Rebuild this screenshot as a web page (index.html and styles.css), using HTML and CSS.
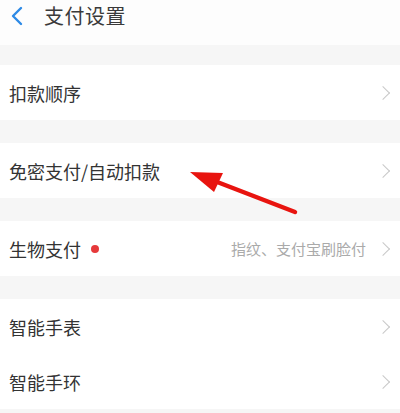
FILE: index.html
```html
<!DOCTYPE html>
<html lang="zh">
<head>
<meta charset="utf-8">
<link rel="stylesheet" href="styles.css">
</head>
<body>
<div class="page">
  <header class="topbar">
    <svg class="back" width="14" height="20" viewBox="0 0 14 20"><path d="M11 2 L3 10 L11 18" fill="none" stroke="#2d8ae6" stroke-width="2.4" stroke-linecap="round" stroke-linejoin="round"/></svg>
    <span class="title">支付设置</span>
  </header>
  <div class="gap g1"></div>
  <div class="row"><span class="label">扣款顺序</span><span class="chev"></span></div>
  <div class="gap"></div>
  <div class="row"><span class="label">免密支付/自动扣款</span><span class="chev"></span></div>
  <div class="gap"></div>
  <div class="row"><span class="label">生物支付</span><span class="dot"></span><span class="value">指纹、支付宝刷脸付</span><span class="chev"></span></div>
  <div class="gap"></div>
  <div class="row"><span class="label">智能手表</span><span class="chev"></span></div>
  <div class="row"><span class="label">智能手环</span><span class="chev"></span></div>
  <svg class="arrow" width="400" height="413" viewBox="0 0 400 413">
    <line x1="295" y1="212" x2="212" y2="180" stroke="#e8140f" stroke-width="4.5" stroke-linecap="round"/>
    <polygon points="190,172 223,173 214,192" fill="#e8140f"/>
  </svg>
</div>
</body>
</html>
```
FILE: styles.css
```css
* { box-sizing: border-box; }
html, body { margin: 0; padding: 0; }
body {
  width: 400px;
  height: 413px;
  overflow: hidden;
  background: #f6f6f6;
  font-family: "Noto Sans CJK SC", "Noto Sans", sans-serif;
  color: #333;
}
.page { position: relative; width: 400px; height: 413px; }
.topbar {
  height: 45px;
  background: #fdfdfd;
  display: flex;
  align-items: center;
  padding-left: 10px;
  padding-bottom: 14px;
}
.back { margin-right: 20px; }
.title { font-size: 20px; color: #3a3a3a; letter-spacing: 0.5px; }
.gap { height: 23px; }
.g1 { height: 20px; }
.row {
  height: 55px;
  background: #fff;
  display: flex;
  align-items: center;
  padding: 0 8px 0 9px;
}
.label { font-size: 18px; color: #333; }
.dot {
  width: 8px; height: 8px; border-radius: 50%;
  background: #e6393a;
  margin-left: 10px;
}
.value {
  margin-left: auto;
  font-size: 15px;
  color: #aaa;
  margin-right: 12px;
}
.chev {
  margin-left: auto;
  width: 10px; height: 10px;
  border-top: 1.5px solid #c8c8c8;
  border-right: 1.5px solid #c8c8c8;
  transform: rotate(45deg);
  margin-right: 4px;
}
.value + .chev { margin-left: 0; }
.arrow { position: absolute; left: 0; top: 0; pointer-events: none; }
```
